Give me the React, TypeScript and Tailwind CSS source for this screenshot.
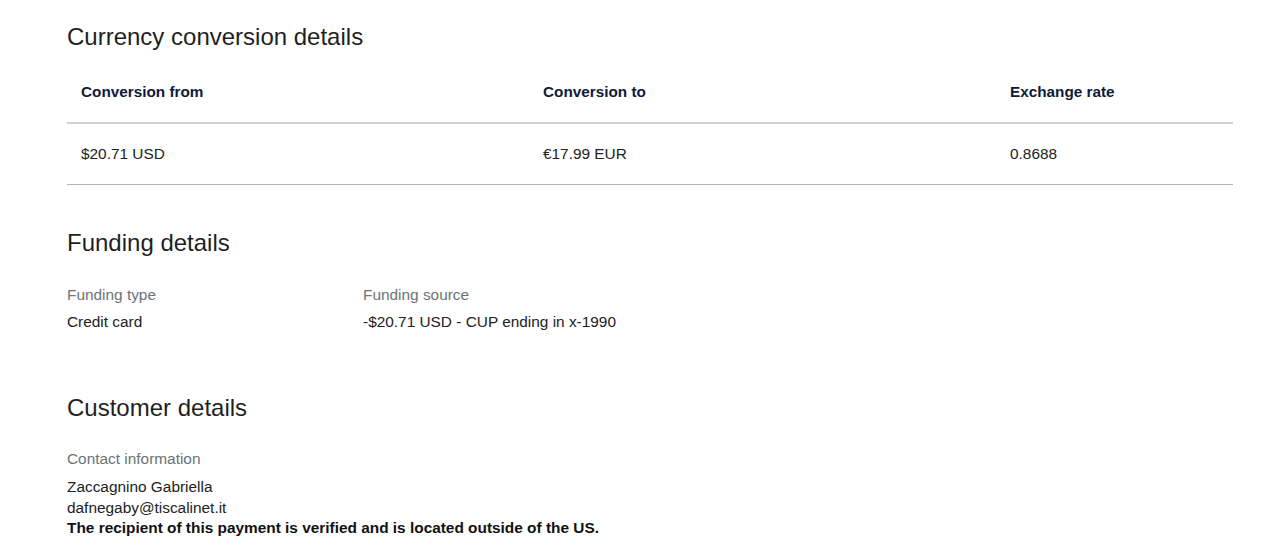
const rows = [
  { from: "$20.71 USD", to: "€17.99 EUR", rate: "0.8688" },
];

function SectionTitle({ children }: { children: React.ReactNode }) {
  return (
    <h2 className="text-[24px] leading-[32px] font-normal text-[#1f1f1f]">
      {children}
    </h2>
  );
}

export default function App() {
  return (
    <div
      className="min-h-[546px] bg-white pl-[67px] pr-[47px] pt-[21px] text-[15.4px] leading-[20px] text-[#222]"
      style={{ fontFamily: '"Liberation Sans", Arial, sans-serif' }}
    >
      <section>
        <SectionTitle>Currency conversion details</SectionTitle>
        <div className="mt-[9px]">
          <div className="grid h-[62px] grid-cols-[476px_467px_1fr] items-center border-b-2 border-[#d0d0d0] text-[15.3px] font-bold text-[#101a38]">
            <div className="pl-[14px]">Conversion from</div>
            <div>Conversion to</div>
            <div>Exchange rate</div>
          </div>
          {rows.map((row) => (
            <div
              key={row.from}
              className="grid h-[61px] grid-cols-[476px_467px_1fr] items-center border-b border-[#b4b4b4]"
            >
              <div className="pl-[14px]">{row.from}</div>
              <div>{row.to}</div>
              <div>{row.rate}</div>
            </div>
          ))}
        </div>
      </section>

      <section className="mt-[42px]">
        <SectionTitle>Funding details</SectionTitle>
        <div className="mt-[26px] grid grid-cols-[296px_1fr] gap-y-[7px]">
          <div className="text-[#6c7378]">Funding type</div>
          <div className="text-[#6c7378]">Funding source</div>
          <div>Credit card</div>
          <div>-$20.71 USD - CUP ending in x-1990</div>
        </div>
      </section>

      <section className="mt-[60px]">
        <SectionTitle>Customer details</SectionTitle>
        <div className="mt-[25px] text-[#6c7378]">Contact information</div>
        <div className="mt-[8px] leading-[20.5px]">
          <div>Zaccagnino Gabriella</div>
          <div>dafnegaby@tiscalinet.it</div>
          <div className="font-bold text-[#111]">
            The recipient of this payment is verified and is located outside of the US.
          </div>
        </div>
      </section>
    </div>
  );
}
